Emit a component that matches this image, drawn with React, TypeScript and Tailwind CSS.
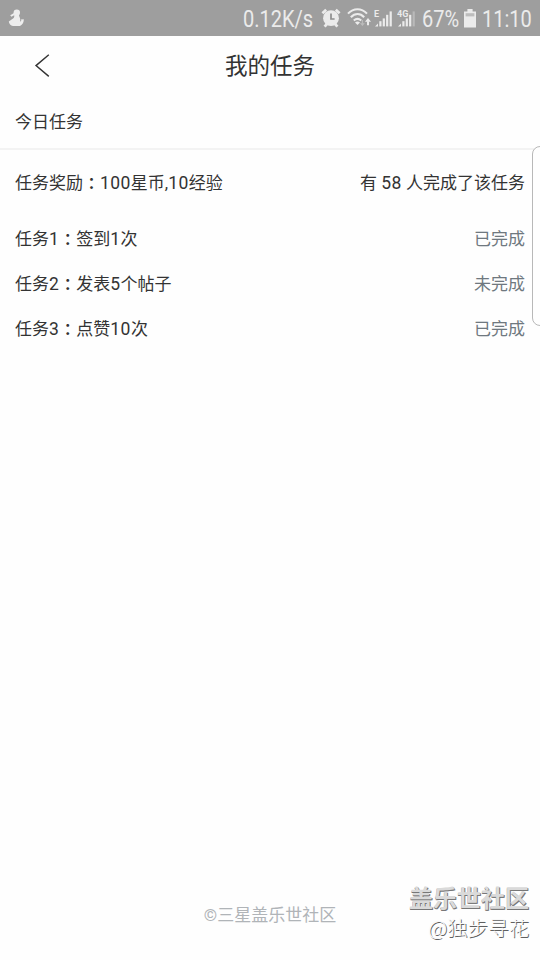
import React from "react";

type Task = {
  id: number;
  name: React.ReactNode;
  done: boolean;
};

// Digits are set a little wider than the Chinese text around them
const Num: React.FC<{ children: React.ReactNode }> = ({ children }) => (
  <span className="text-[17.5px] leading-none tracking-[0.45px]">{children}</span>
);

const tasks: Task[] = [
  { id: 1, name: <>签到<Num>1</Num>次</>, done: true },
  { id: 2, name: <>发表<Num>5</Num>个帖子</>, done: false },
  { id: 3, name: <>点赞<Num>10</Num>次</>, done: true },
];

// Full-width colon, centred in its box
const Colon: React.FC = () => (
  <span className="relative top-px font-['Noto_Sans_CJK_TC',sans-serif] font-medium leading-none" lang="zh-TW">：</span>
);

const StatusText: React.FC<{ className: string; children: string }> = ({ className, children }) => (
  <div className={`h-full ${className}`}>
    <span className="inline-block origin-left scale-x-[0.87] whitespace-nowrap text-[23px] font-normal leading-[39px]">
      {children}
    </span>
  </div>
);

const PersonIcon: React.FC = () => (
  <svg className="ml-[8px] mt-[9px]" width="17" height="18" viewBox="0 0 17 18" fill="#ededed">
    <circle cx="8.8" cy="3.6" r="3.2" />
    <path d="M2.2 6.2 6 4 7 5.8 3.4 7.8Z" />
    <path d="M6.2 6 11 5.8C10.8 7.4 12.2 8.4 12.2 10.4 12.2 11.6 12 12.2 12.4 12.4 13.2 12.6 13.6 11.8 12.8 10.6L15.8 10.2C16 13 14.6 15.8 12 17H5C2.6 16.6 1 14.6 .8 12.4L4 10.2C5.6 9.6 6.6 8.2 6.2 6Z" />
  </svg>
);

const AlarmIcon: React.FC = () => (
  <svg width="20" height="20" viewBox="0 0 20 20" fill="none">
    <path d="M1.4 5.2 5.2 1.8M18.6 5.2 14.8 1.8M3.6 18.6 6 15.8M16.4 18.6 14 15.8" stroke="#ebebeb" strokeWidth="2.8" />
    <circle cx="10" cy="10.2" r="7.9" fill="#ebebeb" />
    <path d="M10 5.6V11H13.6" stroke="#8e8e8e" strokeWidth="1.7" />
  </svg>
);

const WifiIcon: React.FC = () => (
  <svg width="26" height="20" viewBox="0 0 26 20" fill="none">
    <path d="M1 5.6C6.5-.2 14.5-.2 20 5.6M3.8 9.2C8 5 13.2 5 17.2 9.2M6.8 12.6C9.2 10.3 11.8 10.3 14.2 12.6" stroke="#ebebeb" strokeWidth="2.1" />
    <path d="M8 14.6C9.6 13.2 11.4 13.2 13 14.6L10.5 17Z" fill="#ebebeb" />
    <path d="M15.4 12V17M13.6 15.2 15.4 17.2 17.2 15.2" stroke="#bcbcbc" strokeWidth="1.1" />
    <path d="M21 17.2V13.2" stroke="#ebebeb" strokeWidth="2" />
    <path d="M18 13.8 21 10 24 13.8Z" fill="#ebebeb" />
  </svg>
);

const SignalIcon: React.FC<{ label: string; weak?: boolean }> = ({ label, weak }) => (
  <svg width="20" height="20" viewBox="0 0 20 20" fill="#ebebeb">
    <text x="0" y="8.5" fontSize="9" fontWeight="700" fontFamily="Roboto, sans-serif">{label}</text>
    <path d="M1 18.4 4 15.4V18.4Z" />
    <rect x="5.3" y="13.2" width="2.2" height="5.2" />
    <rect x="8.7" y="10.4" width="2.2" height="8" />
    <rect x="12.1" y="6.8" width="2.2" height="11.6" />
    <rect x="15.6" y="3.4" width="2.2" height="15" opacity={weak ? 0.35 : 1} />
  </svg>
);

const BatteryIcon: React.FC = () => (
  <svg width="12" height="19" viewBox="0 0 12 19">
    <path d="M3.4 0H8.6V2.4H12V18.4H0V2.4H3.4Z" fill="#ebebeb" />
    <rect x="1.6" y="4.2" width="8.8" height="3.2" fill="#bdbdbd" />
  </svg>
);

const StatusBar: React.FC = () => (
  <div className="flex h-9 justify-between bg-[#9e9e9e] text-[#ebebeb] font-[Roboto,sans-serif]">
    <PersonIcon />
    <div className="flex h-full w-[297px]">
      <StatusText className="w-[78px]">0.12K/s</StatusText>
      <div className="mt-[8px] flex shrink-0">
        <AlarmIcon />
        <div className="ml-[6px]"><WifiIcon /></div>
        <div className="ml-px"><SignalIcon label="E" /></div>
        <div className="ml-[3px]"><SignalIcon label="4G" weak /></div>
      </div>
      <StatusText className="ml-[5px] w-[42px] shrink-0">67%</StatusText>
      <div className="mt-[9px] shrink-0"><BatteryIcon /></div>
      <StatusText className="ml-[6px] w-[50px] shrink-0">11:10</StatusText>
    </div>
  </div>
);

const App: React.FC = () => {
  return (
    <div
      lang="zh-CN"
      className="relative flex h-[960px] w-[540px] flex-col overflow-hidden bg-[#fefefe] font-[Roboto,'Noto_Sans_CJK_SC',sans-serif] text-[17px] leading-[25px] text-[#333]"
    >
      <StatusBar />

      <header className="grid h-[60px] grid-cols-[80px_1fr_80px] items-center">
        <button aria-label="返回" className="pl-[34px]">
          <svg width="16" height="24" viewBox="0 0 16 24" fill="none" stroke="#333" strokeWidth="1.4">
            <path d="M14.8 .8 2 11.6 14.8 22.4" />
          </svg>
        </button>
        <h1 className="text-center text-[22.5px] leading-[32px]">我的任务</h1>
      </header>

      <h2 className="h-[54px] border-b-2 border-[#f3f3f3] px-[15px] pt-[14px]">今日任务</h2>

      <div className="flex justify-between px-[15px] pt-[21px]">
        <p>任务奖励<Colon /><Num>100</Num>星币,<Num>10</Num>经验</p>
        <p>有 <Num>58</Num> 人完成了该任务</p>
      </div>

      <ul className="mt-[31px] flex flex-col gap-5 px-[15px]">
        {tasks.map((task) => (
          <li key={task.id} className="flex h-[25px] justify-between">
            <span>任务<Num>{task.id}</Num><Colon />{task.name}</span>
            <span className="text-[#6f787f]">{task.done ? "已完成" : "未完成"}</span>
          </li>
        ))}
      </ul>

      <footer className="mt-auto pb-[32px] text-center text-[#b0b4b8]">©三星盖乐世社区</footer>

      {/* Edge panel handle */}
      <div className="absolute left-[532px] top-[146px] h-[180px] w-5 rounded-[8px] border border-[#b8b8b8] bg-[#fefefe]" />

      {/* Watermark */}
      <div className="absolute bottom-[18px] right-[11px] text-right text-[#dadada] font-['Noto_Sans_CJK_SC',sans-serif]">
        <p className="text-[24px] font-bold leading-[33px] [text-shadow:1px_1px_0_#777,0_1px_0_#777]">盖乐世社区</p>
        <p className="text-[20.5px] font-light leading-[29px] text-[#f8f8f8] [text-shadow:1px_1px_0_#606060]">
          <span className="text-[21px]">@</span>独步寻花
        </p>
      </div>
    </div>
  );
};

export default App;
